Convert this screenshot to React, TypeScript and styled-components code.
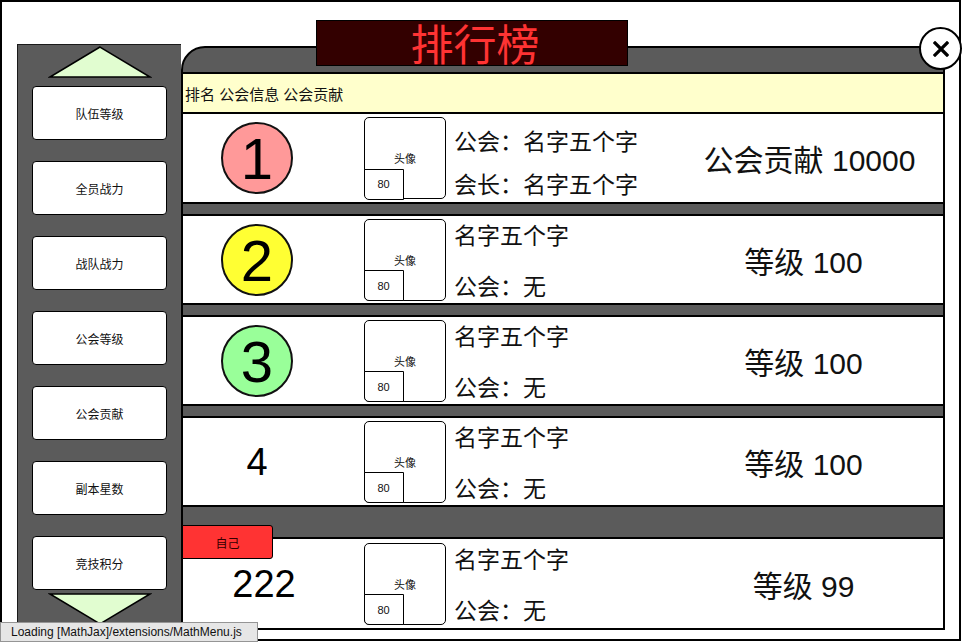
import React from "react";
import styled, { createGlobalStyle } from "styled-components";

const GlobalStyle = createGlobalStyle`
  body {
    margin: 0;
    background: #ffffff;
    font-family: "Liberation Sans", "Noto Sans CJK SC", sans-serif;
    color: #000000;
  }
  * {
    box-sizing: border-box;
  }
`;

type Entry = {
  rank: number;
  badge?: string;
  lines: [string, string];
  value: string;
};

const MENU = ["队伍等级", "全员战力", "战队战力", "公会等级", "公会贡献", "副本星数", "竞技积分"];

const ENTRIES: Entry[] = [
  { rank: 1, badge: "#ff9999", lines: ["公会：名字五个字", "会长：名字五个字"], value: "公会贡献 10000" },
  { rank: 2, badge: "#ffff33", lines: ["名字五个字", "公会：无"], value: "等级 100" },
  { rank: 3, badge: "#99ff99", lines: ["名字五个字", "公会：无"], value: "等级 100" },
  { rank: 4, lines: ["名字五个字", "公会：无"], value: "等级 100" },
];

const SELF: Entry = { rank: 222, lines: ["名字五个字", "公会：无"], value: "等级 99" };

function Arrow({ down }: { down?: boolean }) {
  return (
    <svg width="104" height="34" viewBox="0 0 104 34">
      <polygon
        points={down ? "2,2 102,2 52,32" : "52,2 2,32 102,32"}
        fill="#e1fdd0"
        stroke="#000"
        strokeWidth="1.5"
      />
    </svg>
  );
}

function RankRow({ entry, first, last, mt }: { entry: Entry; first?: boolean; last?: boolean; mt: number }) {
  return (
    <Row $first={first} $last={last} $mt={mt}>
      <RankCell $shift={last ? 14 : 0}>
        {entry.badge ? (
          <Badge $color={entry.badge}>{entry.rank}</Badge>
        ) : (
          <PlainRank>{entry.rank}</PlainRank>
        )}
      </RankCell>
      <Avatar>
        头像
        <Level>80</Level>
      </Avatar>
      <Info $tight={first}>
        <Line>{entry.lines[0]}</Line>
        <Line>{entry.lines[1]}</Line>
      </Info>
      <Value $shift={first ? 12 : 0}>{entry.value}</Value>
      {last && <SelfTag>自己</SelfTag>}
    </Row>
  );
}

export default function App() {
  return (
    <>
      <GlobalStyle />
      <Frame>
        <Sidebar>
          <Arrow />
          <MenuList>
            {MENU.map((m) => (
              <MenuButton key={m}>{m}</MenuButton>
            ))}
          </MenuList>
          <DownWrap>
            <Arrow down />
          </DownWrap>
        </Sidebar>

        <Panel>
          <HeaderRow>排名 公会信息 公会贡献</HeaderRow>
          {ENTRIES.map((e, i) => (
            <RankRow key={e.rank} entry={e} first={i === 0} mt={i === 0 ? 0 : 10} />
          ))}
          <RankRow entry={SELF} last mt={30} />
        </Panel>

        <Title>排行榜</Title>
        <CloseButton>
          <svg width="16" height="16" viewBox="0 0 16 16">
            <path d="M2 2 L14 14 M14 2 L2 14" stroke="#000" strokeWidth="3.2" strokeLinecap="square" />
          </svg>
        </CloseButton>
      </Frame>
      <Loading>Loading [MathJax]/extensions/MathMenu.js</Loading>
    </>
  );
}

const Frame = styled.div`
  position: relative;
  display: flex;
  width: 961px;
  height: 641px;
  border: 2px solid #000000;
  padding: 42px 0 0 15px;
  background: #ffffff;
`;

const Sidebar = styled.aside`
  display: flex;
  flex-direction: column;
  align-items: center;
  width: 164px;
  background: #5b5b5b;
  border-left: 1px solid #1a1a1a;
  border-top: 1px solid #1a1a1a;
`;

const MenuList = styled.div`
  display: flex;
  flex-direction: column;
  gap: 21px;
  margin-top: 7px;
`;

const MenuButton = styled.button`
  width: 135px;
  height: 54px;
  background: #ffffff;
  border: 1.5px solid #000000;
  border-radius: 4px;
  font-family: "Liberation Sans", "Noto Sans CJK SC", sans-serif;
  font-size: 12px;
  color: #111111;
  padding: 0;
  cursor: pointer;
`;

const DownWrap = styled.div`
  margin-top: 2px;
`;

const Panel = styled.main`
  display: flex;
  flex-direction: column;
  align-self: flex-start;
  width: 764px;
  height: 584px;
  margin-top: 2px;
  border: 2px solid #000000;
  border-top-left-radius: 24px;
  background: #5b5b5b;
  padding-top: 24px;
`;

const HeaderRow = styled.div`
  display: flex;
  align-items: center;
  height: 42px;
  background: #ffffcc;
  border-top: 2px solid #000000;
  border-bottom: 2px solid #000000;
  padding-left: 2px;
  font-size: 15px;
  color: #111111;
`;

const Row = styled.div<{ $first?: boolean; $last?: boolean; $mt: number }>`
  position: relative;
  display: flex;
  align-items: center;
  height: ${(p) => (p.$first ? 90 : 91)}px;
  margin-top: ${(p) => p.$mt}px;
  background: #ffffff;
  border-top: ${(p) => (p.$first ? "none" : "2px solid #000000")};
  border-bottom: ${(p) => (p.$last ? "none" : "2px solid #000000")};
`;

const RankCell = styled.div<{ $shift: number }>`
  display: flex;
  justify-content: center;
  align-items: center;
  width: 148px;
  padding-left: ${(p) => p.$shift}px;
`;

const Badge = styled.div<{ $color: string }>`
  display: flex;
  justify-content: center;
  align-items: center;
  width: 72px;
  height: 72px;
  border-radius: 50%;
  border: 2px solid #111111;
  background: ${(p) => p.$color};
  font-size: 58px;
  line-height: 1;
  padding-top: 2px;
`;

const PlainRank = styled.div`
  font-size: 38px;
  line-height: 1;
`;

const Avatar = styled.div`
  position: relative;
  display: flex;
  justify-content: center;
  align-items: center;
  width: 82px;
  height: 82px;
  margin-left: 33px;
  border: 1.5px solid #000000;
  border-radius: 5px;
  font-size: 11px;
  color: #111111;
`;

const Level = styled.div`
  position: absolute;
  left: -1.5px;
  bottom: -1.5px;
  display: flex;
  align-items: center;
  justify-content: center;
  width: 40px;
  height: 31px;
  border: 1.5px solid #000000;
  border-radius: 0 0 0 5px;
  font-size: 11px;
  background: #ffffff;
`;

const Info = styled.div<{ $tight?: boolean }>`
  display: flex;
  flex-direction: column;
  gap: ${(p) => (p.$tight ? 13 : 21)}px;
  width: 210px;
  margin-left: 8px;
  padding-top: ${(p) => (p.$tight ? 10 : 3)}px;
`;

const Line = styled.div`
  font-size: 23px;
  line-height: 30px;
  white-space: nowrap;
  color: #111111;
`;

const Value = styled.div<{ $shift: number }>`
  flex: 1;
  text-align: center;
  font-size: 30px;
  color: #111111;
  white-space: nowrap;
  padding-left: ${(p) => p.$shift}px;
`;

const SelfTag = styled.div`
  position: absolute;
  left: -1px;
  top: -14px;
  display: flex;
  align-items: center;
  justify-content: center;
  width: 91px;
  height: 34px;
  background: #ff3333;
  border: 1.5px solid #000000;
  border-radius: 0 3px 3px 0;
  font-size: 12px;
  color: #330000;
`;

const Title = styled.div`
  position: absolute;
  left: 314px;
  top: 18px;
  width: 312px;
  height: 46px;
  background: #330000;
  border: 1px solid #000000;
  color: #ff3333;
  font-family: "Noto Sans CJK SC", sans-serif;
  font-size: 43px;
  font-weight: 400;
  line-height: 42px;
  text-align: center;
  padding-left: 6px;
`;

const CloseButton = styled.div`
  position: absolute;
  left: 917px;
  top: 25px;
  display: flex;
  align-items: center;
  justify-content: center;
  width: 43px;
  height: 43px;
  border-radius: 50%;
  border: 2px solid #000000;
  background: #ffffff;
`;

const Loading = styled.div`
  position: fixed;
  left: 0;
  bottom: 1px;
  width: 258px;
  height: 20px;
  display: flex;
  align-items: center;
  padding-left: 10px;
  background: #e6e6e6;
  border: 1px solid #959595;
  font-family: "Liberation Sans", sans-serif;
  font-size: 12px;
  color: #111111;
  white-space: nowrap;
`;
